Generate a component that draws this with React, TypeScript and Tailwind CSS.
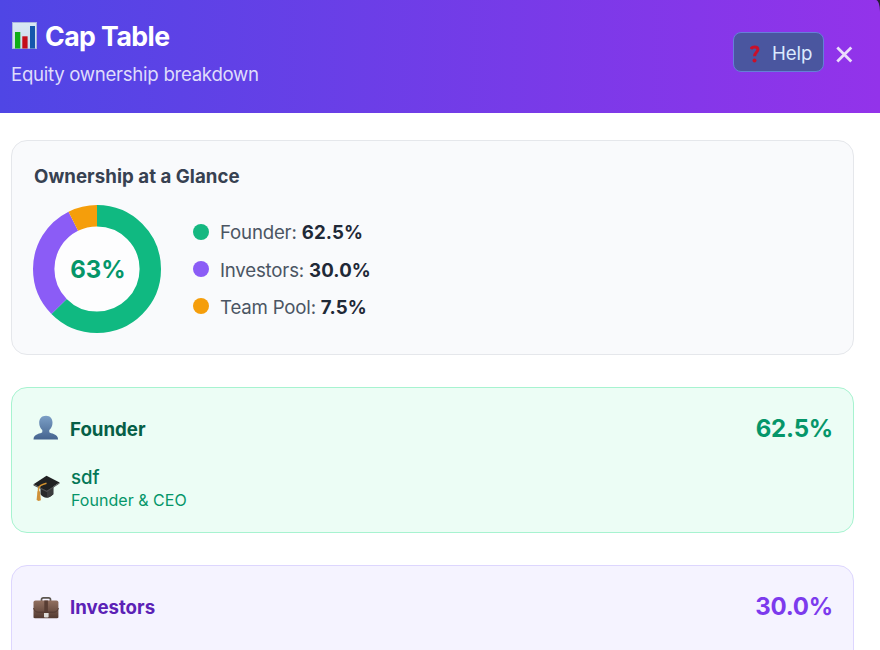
import type { ReactNode } from "react";

const slices = [
  { label: "Founder", value: 62.5, color: "#10b981", dot: "bg-[#15b881]", pad: "pt-[2px]" },
  { label: "Investors", value: 30.0, color: "#8b5cf6", dot: "bg-[#8b5cf6]", pad: "pt-1" },
  { label: "Team Pool", value: 7.5, color: "#f59e0b", dot: "bg-[#f59e0b]", pad: "pt-1" },
];

function ChartIcon() {
  return (
    <svg width="25" height="27" viewBox="0 0 25 27" className="-mt-[2px] shrink-0">
      <defs>
        <linearGradient id="sheet" x1="0" y1="0" x2="0" y2="1">
          <stop offset="0" stopColor="#d9e8f3" />
          <stop offset="1" stopColor="#ccdaec" />
        </linearGradient>
      </defs>
      <rect x="0.5" y="0.5" width="24" height="26" fill="url(#sheet)" stroke="#a9b4df" />
      <rect x="3" y="10" width="5.3" height="16.5" fill="#10ad18" />
      <rect x="10.3" y="14.3" width="5.3" height="12.2" fill="#c40d19" />
      <rect x="18" y="4" width="5" height="22.5" fill="#1556ac" />
    </svg>
  );
}

function QuestionIcon() {
  return (
    <svg width="10" height="18" viewBox="0 0 10 18" className="shrink-0">
      <path
        d="M.8 4C1.600 2.500 3 1.900 4.700 1.900c2 0 3.200 1 3.200 2.700 0 2.700-3.300 2.900-3.300 6.700"
        fill="none"
        stroke="#c9102a"
        strokeWidth="3"
      />
      <circle cx="4.500" cy="15.400" r="2" fill="#c9102a" />
    </svg>
  );
}

function PersonIcon() {
  return (
    <svg width="26" height="26" viewBox="0 0 26 26" className="shrink-0">
      <defs>
        <linearGradient id="person" x1="0" y1="0" x2="0" y2="1">
          <stop offset="0" stopColor="#7c9fc6" />
          <stop offset="1" stopColor="#45648f" />
        </linearGradient>
      </defs>
      <path
        d="M13 0.800c4.200 0 6.500 2.800 6.500 7 0 3.100-1.400 5.800-3.200 7.300v2.100c1.200 1.500 8.800 1.100 8.800 7.300H.500c0-6.200 7.600-5.800 8.800-7.300v-2.100C7.500 13.600 6.200 10.900 6.200 7.800c0-4.200 2.400-7 6.800-7z"
        fill="url(#person)"
      />
    </svg>
  );
}

function CapIcon() {
  return (
    <svg width="28" height="28" viewBox="0 0 28 28" className="mt-px shrink-0">
      <path d="M7.500 11v8.200c3 3.800 7.500 5.500 12.800 0V10z" fill="#292a2b" />
      <path d="M14 15.500l6.300-4v7.700c-2 2.100-4 3-6.300 3.200z" fill="#3b3c3d" />
      <path d="M.5 9.300L13.500 0.800 26.600 7.500 13.800 15.800z" fill="#202122" />
      <path d="M.5 9.300l13.300 6.500 12.800-8.300v.9L13.800 17 .5 10.400z" fill="#515253" />
      <path d="M13.500 8.200c-4 1-7.800 2.100-8 5.500v5" fill="none" stroke="#d6942f" strokeWidth="1.500" />
      <path d="M4.500 16.200h2.400l1 9-2.300.8-2-1z" fill="#cf9139" />
    </svg>
  );
}

function BriefcaseIcon() {
  return (
    <svg width="26" height="24" viewBox="0 0 26 24" className="mt-[3px] shrink-0">
      <defs>
        <linearGradient id="leather" x1="0" y1="0" x2="0" y2="1">
          <stop offset="0" stopColor="#927060" />
          <stop offset="1" stopColor="#533a31" />
        </linearGradient>
      </defs>
      <path d="M8.500 5V3.600c0-1 .6-1.700 1.800-1.700h5.400c1.200 0 1.800.7 1.800 1.700V5" fill="none" stroke="#5c5650" strokeWidth="1.700" />
      <path d="M2.500 4.500h21c1.200 0 1.900.8 1.900 2V21c0 .8-.4 1.200-1.200 1.200H1.700c-.8 0-1.200-.4-1.200-1.200V6.500c0-1.200.8-2 2-2z" fill="url(#leather)" />
      <path d="M.5 12c.8 3 2.500 4.200 5 4.200h15c2.500 0 4.200-1.200 5-4.200" fill="none" stroke="#4b342d" strokeWidth="0.800" />
      <path d="M11.300 4.500h3.600V17h-3.600z" fill="#573d33" />
      <path d="M11 17h4.600v4c-.6.8-4 .8-4.600 0z" fill="#dedbd7" />
    </svg>
  );
}

function Donut() {
  const r = 53.3;
  const length = 2 * Math.PI * r;
  let used = 0;
  return (
    <div className="relative size-32 shrink-0">
      <svg width="128" height="128" viewBox="0 0 128 128" className="-rotate-90">
        <circle cx="64" cy="64" r="43" fill="#fdfdfe" />
        {slices.map((s) => {
          const start = used;
          used += s.value;
          return (
            <circle
              key={s.label}
              cx="64"
              cy="64"
              r={r}
              fill="none"
              stroke={s.color}
              strokeWidth="21.400"
              strokeDasharray={`${(s.value / 100) * length} ${length}`}
              strokeDashoffset={-(start / 100) * length}
            />
          );
        })}
      </svg>
      <span className="absolute inset-0 flex items-center justify-center pt-[2px] pl-[2px] text-2xl font-bold text-[#059669]">63%</span>
    </div>
  );
}

function SectionHead({ icon, title, value, titleClass, valueClass }: { icon: ReactNode; title: string; value: string; titleClass: string; valueClass: string }) {
  return (
    <div className="flex h-9 items-center justify-between">
      <div className="flex items-center gap-[11px]">
        {icon}
        <h3 className={`pt-1 text-[18.667px] font-bold ${titleClass}`}>{title}</h3>
      </div>
      <span className={`-mr-px pt-px text-2xl font-bold tracking-[-0.2px] ${valueClass}`}>{value}</span>
    </div>
  );
}

export default function App() {
  return (
    <div className="h-[650px] w-[880px] overflow-hidden bg-[#252033] font-['Inter',sans-serif]">
      <header className="flex h-[113px] justify-between rounded-tr-[4px_12px] bg-linear-to-r/srgb from-[#4f46e5] to-[#9333ea] pl-[11px] pr-[27px]">
        <div className="pt-[18px]">
          <div className="flex items-center gap-2 pl-[1px]">
            <ChartIcon />
            <h1 className="text-[26.667px] leading-9 font-bold tracking-[-0.55px] text-white">Cap Table</h1>
          </div>
          <p className="mt-[7px] text-[18.667px] leading-7 tracking-[-0.3px] text-[#dfdcfb]">Equity ownership breakdown</p>
        </div>
        <div className="mt-8 flex h-10 items-center gap-3 self-start">
          <button className="flex h-10 w-[91px] items-center rounded-lg border border-[#657fd8] bg-[#4a569f] pt-[3px] pl-[16px] text-[18.667px] tracking-[-0.1px] text-[#dbeafe]">
            <QuestionIcon />
            <span className="ml-3">Help</span>
          </button>
          <button aria-label="Close" className="mt-[5px]">
            <svg width="17" height="17" viewBox="0 0 17 17">
              <path d="M1.300 1.500l14 14M15.300 1.500l-14 14" stroke="#eadcfb" strokeWidth="2.800" />
            </svg>
          </button>
        </div>
      </header>

      <main className="flex h-[537px] flex-col gap-8 bg-white pt-[27px] pr-[26px] pl-[11px]">
        <section className="h-[215px] shrink-0 rounded-2xl border border-[#e5e7eb] bg-[#f9fafc] px-[21px] pt-[22px]">
          <h2 className="pl-[1px] text-[18.667px] leading-7 font-bold tracking-[0.04px] text-[#374151]">Ownership at a Glance</h2>
          <div className="mt-[14px] flex items-center gap-8">
            <Donut />
            <ul className="flex flex-col gap-[9px]">
              {slices.map((s) => (
                <li key={s.label} className="flex h-7 items-center gap-[11px] text-[18.667px] leading-7 text-[#4b5563]">
                  <span className={`size-4 rounded-full ${s.dot}`} />
                  <span className={`tracking-[-0.2px] ${s.pad}`}>
                    {s.label}: <b className="font-bold tracking-[0.12px] text-[#1f2937]">{s.value.toFixed(1)}%</b>
                  </span>
                </li>
              ))}
            </ul>
          </div>
        </section>

        <section className="h-[146px] shrink-0 rounded-2xl border border-[#a7f3d0] bg-[#ecfdf5] px-[21px] pt-[22px]">
          <SectionHead icon={<PersonIcon />} title="Founder" value="62.5%" titleClass="text-[#065f46]" valueClass="text-[#059669]" />
          <div className="mt-[19px] flex items-center gap-[10px]">
            <CapIcon />
            <div className="pt-[1px]">
              <p className="text-[18.667px] leading-6 font-medium text-[#047857]">sdf</p>
              <p className="text-base leading-[21px] tracking-[0.03px] text-[#059669]">Founder &amp; CEO</p>
            </div>
          </div>
        </section>

        <section className="h-[146px] shrink-0 rounded-2xl border border-[#ddd6fe] bg-[#f5f3ff] px-[21px] pt-[22px]">
          <SectionHead icon={<BriefcaseIcon />} title="Investors" value="30.0%" titleClass="text-[#5b21b6]" valueClass="text-[#7c3aed]" />
        </section>
      </main>
    </div>
  );
}
